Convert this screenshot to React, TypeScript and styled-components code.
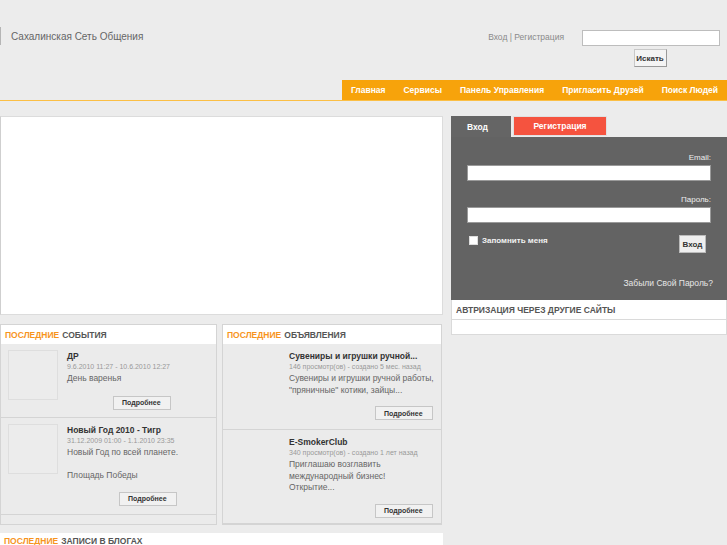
import React from "react";
import styled, { createGlobalStyle } from "styled-components";

const Global = createGlobalStyle`
  html, body { margin: 0; padding: 0; background: #ececec; }
  body { font-family: "Liberation Sans", Arial, sans-serif; color: #555; }
  * { box-sizing: border-box; }
`;

const Page = styled.div`
  width: 727px;
  min-height: 545px;
  overflow: hidden;
`;

const Header = styled.header`
  height: 80px;
  display: flex;
  justify-content: space-between;
  align-items: flex-start;
  padding: 0 7px 0 0;
`;

const Brand = styled.div`
  margin-top: 27px;
  height: 18px;
  border-left: 1px solid #b5b5b5;
  padding-left: 10px;
  display: flex;
  align-items: center;
  font-size: 10px;
  color: #666;
`;

const HeaderRight = styled.div`
  display: flex;
  align-items: flex-start;
  gap: 18px;
  margin-top: 30px;
`;

const AuthLinks = styled.div`
  font-size: 8.5px;
  color: #8a8a8a;
  line-height: 14px;
  a { color: #8a8a8a; text-decoration: none; }
`;

const SearchBlock = styled.form`
  display: flex;
  flex-direction: column;
  align-items: center;
  gap: 3px;
  margin: 0;
`;

const SearchInput = styled.input`
  width: 138px;
  height: 16px;
  border: 1px solid #bdbdbd;
  background: #fff;
  padding: 0 3px;
  outline: none;
`;

const SearchButton = styled.button`
  width: 33px;
  height: 18px;
  padding: 0;
  margin-right: 2px;
  border: 1px solid #c8c8c8;
  border-right-color: #999;
  border-bottom-color: #999;
  background: #f4f4f4;
  font-family: "Liberation Sans", Arial, sans-serif;
  font-weight: bold;
  font-size: 8px;
  color: #333;
`;

const NavRow = styled.div`
  display: flex;
  justify-content: flex-end;
  border-bottom: 1px solid #fbbf45;
`;

const Nav = styled.nav`
  display: flex;
  height: 20px;
  background: #f7a30b;
`;

const NavItem = styled.a`
  display: flex;
  align-items: center;
  padding: 0 9px;
  color: #fff;
  font-weight: bold;
  font-size: 8.5px;
  text-decoration: none;
  white-space: nowrap;
`;

const Body = styled.div`
  display: flex;
  gap: 8px;
  margin-top: 15px;
  align-items: flex-start;
`;

const MainCol = styled.div`
  width: 443px;
  flex: none;
  display: flex;
  flex-direction: column;
`;

const Banner = styled.div`
  height: 199px;
  background: #fff;
  border: 1px solid #dcdcdc;
  border-left-color: #cfcfcf;
`;

const Columns = styled.div`
  display: grid;
  grid-template-columns: 217px 220px;
  gap: 5px;
  margin-top: 9px;
  align-items: start;
`;

const Box = styled.section<{ $h: number }>`
  height: ${(p) => p.$h}px;
  border: 1px solid #d4d4d4;
  background: #ebebeb;
  display: flex;
  flex-direction: column;
`;

const BoxHead = styled.h3`
  margin: 0;
  height: 19px;
  flex: none;
  background: #fff;
  display: flex;
  align-items: center;
  padding-left: 4px;
  font-size: 8.5px;
  font-weight: bold;
  color: #555;
  text-transform: uppercase;
  span { color: #f7941d; margin-right: 3px; }
`;

const Item = styled.div<{ $h: number }>`
  height: ${(p) => p.$h}px;
  flex: none;
  border-bottom: 1px solid #d4d4d4;
  display: flex;
  padding: 6px 8px 0 7px;
  gap: 9px;
`;

const Thumb = styled.div<{ $empty?: boolean }>`
  width: 50px;
  height: 50px;
  flex: none;
  border: 1px solid ${(p) => (p.$empty ? "transparent" : "#dedede")};
  background: ${(p) => (p.$empty ? "transparent" : "#ececec")};
`;

const ItemText = styled.div`
  flex: 1;
  display: flex;
  flex-direction: column;
  min-width: 0;
`;

const ItemTitle = styled.div`
  font-size: 8.5px;
  font-weight: bold;
  color: #333;
  line-height: 12px;
  white-space: nowrap;
`;

const Meta = styled.div`
  font-size: 7px;
  color: #999;
  line-height: 10px;
  white-space: nowrap;
`;

const Desc = styled.div`
  font-size: 8.5px;
  color: #666;
  line-height: 11.5px;
  margin-top: 1px;
  white-space: nowrap;
`;

const More = styled.button<{ $offset: number; $top: number }>`
  align-self: ${(p) => (p.$offset < 0 ? "flex-end" : "flex-start")};
  margin-left: ${(p) => (p.$offset < 0 ? 0 : p.$offset)}px;
  margin-top: ${(p) => p.$top}px;
  width: 58px;
  height: 14px;
  padding: 0 0 0 8px;
  text-align: left;
  border: 1px solid #c6c6c6;
  background: #f1f1f1;
  font-family: "Liberation Sans", Arial, sans-serif;
  font-size: 7px;
  font-weight: bold;
  color: #333;
`;

const BlogStrip = styled.div`
  margin-top: 8px;
  height: 20px;
  background: #fff;
  display: flex;
  align-items: flex-start;
  padding: 3px 0 0 4px;
  font-size: 8.5px;
  line-height: 10px;
  font-weight: bold;
  color: #555;
  span { color: #f7941d; margin-right: 3px; }
`;

const Sidebar = styled.aside`
  flex: 1;
  display: flex;
  flex-direction: column;
`;

const Tabs = styled.div`
  display: flex;
  gap: 2px;
  height: 21px;
`;

const Tab = styled.div<{ $active?: boolean }>`
  width: ${(p) => (p.$active ? 60 : 94)}px;
  height: ${(p) => (p.$active ? 21 : 20)}px;
  display: flex;
  align-items: center;
  justify-content: ${(p) => (p.$active ? "flex-start" : "center")};
  padding-left: ${(p) => (p.$active ? 16 : 0)}px;
  background: ${(p) => (p.$active ? "#656565" : "#f5533f")};
  border: ${(p) => (p.$active ? "none" : "1px solid #e0e0e0")};
  color: #fff;
  font-weight: bold;
  font-size: 8.5px;
`;

const LoginPanel = styled.form`
  margin: 0;
  height: 163px;
  background: #636363;
  padding: 15px 16px 0 16px;
  display: flex;
  flex-direction: column;
`;

const Label = styled.label<{ $top?: number }>`
  display: block;
  text-align: right;
  font-size: 8px;
  color: #eee;
  line-height: 11px;
  margin-top: ${(p) => p.$top ?? 0}px;
  margin-bottom: 2px;
`;

const Field = styled.input`
  width: 100%;
  height: 16px;
  border: 1px solid #9a9a9a;
  background: #fff;
  outline: none;
`;

const RememberRow = styled.div`
  display: flex;
  justify-content: space-between;
  align-items: flex-start;
  margin-top: 12px;
  padding-right: 5px;
`;

const Remember = styled.label`
  display: flex;
  align-items: center;
  gap: 4px;
  padding-left: 2px;
  font-size: 8px;
  font-weight: bold;
  color: #f2f2f2;
`;

const Check = styled.span`
  width: 9px;
  height: 9px;
  background: #fff;
  border: 1px solid #ddd;
  margin-top: 1px;
`;

const LoginButton = styled.button`
  width: 27px;
  height: 18px;
  padding: 0;
  border: 1px solid #bbb;
  background: #efefef;
  font-family: "Liberation Sans", Arial, sans-serif;
  font-size: 8px;
  font-weight: bold;
  color: #333;
`;

const Forgot = styled.a`
  align-self: flex-end;
  margin-top: 25px;
  margin-right: -2px;
  font-size: 8.5px;
  color: #e6e6e6;
  text-decoration: none;
`;

const SocialBox = styled.div`
  background: #fff;
  border: 1px solid #dadada;
  border-top: none;
`;

const SocialHead = styled.div`
  height: 20px;
  display: flex;
  align-items: center;
  padding-left: 4px;
  border-bottom: 1px solid #dadada;
  font-size: 8.5px;
  font-weight: bold;
  color: #555;
`;

const SocialBody = styled.div`
  height: 14px;
`;

type Ev = {
  title: string;
  meta: string;
  desc: React.ReactNode;
  h: number;
  offset: number;
  top: number;
  empty?: boolean;
};

const events: Ev[] = [
  { title: "ДР", meta: "9.6.2010 11:27 - 10.6.2010 12:27", desc: "День варенья", h: 74, offset: 46, top: 11 },
  {
    title: "Новый Год 2010 - Тигр",
    meta: "31.12.2009 01:00 - 1.1.2010 23:35",
    desc: (
      <>
        Новый Год по всей планете.
        <br />
        <br />
        Площадь Победы
      </>
    ),
    h: 97,
    offset: 52,
    top: 10,
  },
];

const ads: Ev[] = [
  {
    title: "Сувениры и игрушки ручной...",
    meta: "146 просмотр(ов) - создано 5 мес. назад",
    desc: (
      <>
        Сувениры и игрушки ручной работы,
        <br />
        "пряничные" котики, зайцы...
      </>
    ),
    h: 86,
    offset: -1,
    top: 10,
    empty: true,
  },
  {
    title: "E-SmokerClub",
    meta: "340 просмотр(ов) - создано 1 лет назад",
    desc: (
      <>
        Приглашаю возглавить
        <br />
        международный бизнес!
        <br />
        Открытие...
      </>
    ),
    h: 94,
    offset: -1,
    top: 10,
    empty: true,
  },
];

function Entry({ e }: { e: Ev }) {
  return (
    <Item $h={e.h}>
      <Thumb $empty={e.empty} />
      <ItemText>
        <ItemTitle>{e.title}</ItemTitle>
        <Meta>{e.meta}</Meta>
        <Desc>{e.desc}</Desc>
        <More $offset={e.offset} $top={e.top}>Подробнее</More>
      </ItemText>
    </Item>
  );
}

export default function App() {
  return (
    <Page>
      <Global />
      <Header>
        <Brand>Сахалинская Сеть Общения</Brand>
        <HeaderRight>
          <AuthLinks>
            <a href="#">Вход</a> | <a href="#">Регистрация</a>
          </AuthLinks>
          <SearchBlock onSubmit={(ev) => ev.preventDefault()}>
            <SearchInput type="text" />
            <SearchButton type="submit">Искать</SearchButton>
          </SearchBlock>
        </HeaderRight>
      </Header>
      <NavRow>
        <Nav>
          {["Главная", "Сервисы", "Панель Управления", "Пригласить Друзей", "Поиск Людей"].map((n) => (
            <NavItem key={n} href="#">
              {n}
            </NavItem>
          ))}
        </Nav>
      </NavRow>
      <Body>
        <MainCol>
          <Banner />
          <Columns>
            <Box $h={201}>
              <BoxHead>
                <span>Последние</span>События
              </BoxHead>
              {events.map((e) => (
                <Entry key={e.title} e={e} />
              ))}
            </Box>
            <Box $h={201}>
              <BoxHead>
                <span>Последние</span>Объявления
              </BoxHead>
              {ads.map((e) => (
                <Entry key={e.title} e={e} />
              ))}
            </Box>
          </Columns>
          <BlogStrip>
            <span>ПОСЛЕДНИЕ</span>ЗАПИСИ В БЛОГАХ
          </BlogStrip>
        </MainCol>
        <Sidebar>
          <Tabs>
            <Tab $active>Вход</Tab>
            <Tab>Регистрация</Tab>
          </Tabs>
          <LoginPanel onSubmit={(ev) => ev.preventDefault()}>
            <Label>Email:</Label>
            <Field type="text" />
            <Label $top={13}>Пароль:</Label>
            <Field type="password" />
            <RememberRow>
              <Remember>
                <Check />
                Запомнить меня
              </Remember>
              <LoginButton type="submit">Вход</LoginButton>
            </RememberRow>
            <Forgot href="#">Забыли Свой Пароль?</Forgot>
          </LoginPanel>
          <SocialBox>
            <SocialHead>АВТРИЗАЦИЯ ЧЕРЕЗ ДРУГИЕ САЙТЫ</SocialHead>
            <SocialBody />
          </SocialBox>
        </Sidebar>
      </Body>
    </Page>
  );
}
